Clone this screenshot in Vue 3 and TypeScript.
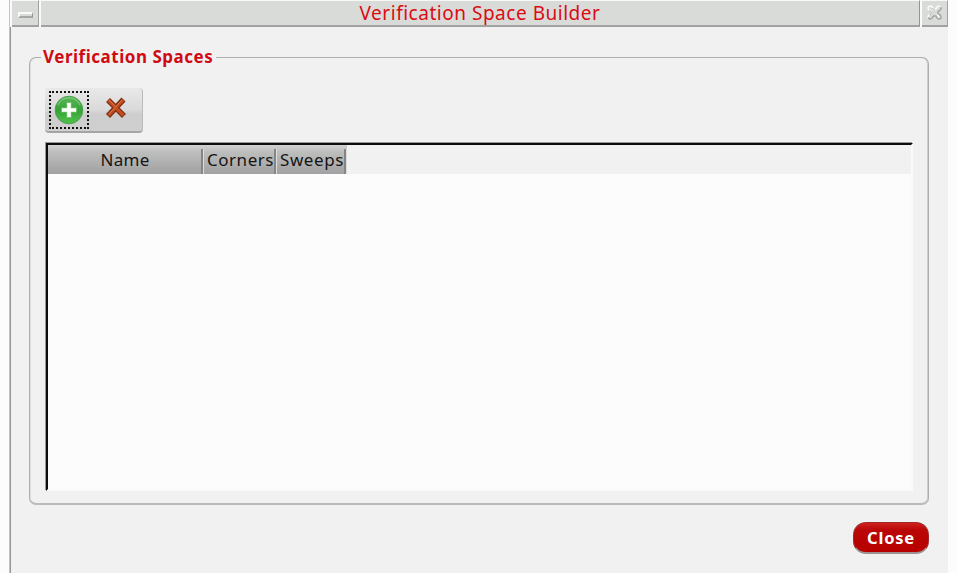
<script setup lang="ts">
interface Column {
  label: string
  key: string
}

const columns: Column[] = [
  { label: 'Name', key: 'name' },
  { label: 'Corners', key: 'corners' },
  { label: 'Sweeps', key: 'sweeps' },
]
</script>

<template>
  <div class="window">
    <header class="titlebar">
      <button class="sys menu" aria-label="Window menu"><span class="dash"></span></button>
      <h1 class="title"><span>Verification Space Builder</span></h1>
      <button class="sys shut" aria-label="Close window">
        <svg width="18" height="18" viewBox="0 0 18 18" fill="none" stroke-linecap="round" stroke-linejoin="round">
          <path d="M2 3.500Q4 1 6.500 3L7.500 5.500H9.500L11 3Q13.500 1 15 3.500M2 3.500Q2 6 5 7.500V9.500Q2 11 2 14" stroke="#fafafa" stroke-width="1.500" />
          <path d="M15 3.500Q15.500 6 12 7.500V9.500Q15.500 11 15 14Q13.500 16 11 14L10 12H7.500L6 14Q4 16 2.500 14" stroke="#a4a6a4" stroke-width="1.500" />
          <path d="M3.500 7L5.500 8.500L4 11M7 4.500L8.500 6" stroke="#a4a6a4" stroke-width="1" />
          <path d="M11.500 11L13 13" stroke="#fafafa" stroke-width="1.300" />
        </svg>
      </button>
    </header>
    <main class="body">
      <fieldset class="group">
        <legend>Verification Spaces</legend>
        <div class="toolbar">
          <button class="tool focused" aria-label="Add">
            <svg width="30" height="30" viewBox="0 0 30 30">
              <defs>
                <linearGradient id="green" x1="0" y1="0" x2="0" y2="1">
                  <stop offset="0" stop-color="#5cb95c" />
                  <stop offset="0.5" stop-color="#35a236" />
                  <stop offset="1" stop-color="#4fc34b" />
                </linearGradient>
              </defs>
              <circle cx="15" cy="15" r="13.800" fill="url(#green)" stroke="#4a9e4d" stroke-width="1" />
              <path d="M4 10A12 12 0 0 1 26 10" fill="none" stroke="#8fd08d" stroke-width="0.900" />
              <path d="M15 7V23M7 15H23" stroke="#72c46d" stroke-width="5.200" />
              <path d="M15 8V22M8 15H22" stroke="#fff" stroke-width="3.600" />
            </svg>
          </button>
          <button class="tool" aria-label="Delete">
            <svg width="22" height="22" viewBox="0 0 22 22" fill="none">
              <path d="M3 3L19 19M18.500 2.500L3 19" stroke="#7a3014" stroke-width="5.600" />
              <path d="M3.200 3.200L18.500 18.500M18.200 3L3.500 18.500" stroke="#c34b20" stroke-width="3.200" />
              <path d="M4 3L10 9M17 3L4 17" stroke="#e47c4c" stroke-width="0.900" />
            </svg>
          </button>
        </div>
        <div class="table">
          <div class="head">
            <div v-for="c in columns" :key="c.key" class="cell" :class="c.key"><span>{{ c.label }}</span></div>
          </div>
          <div class="rows"></div>
        </div>
      </fieldset>
      <footer class="actions">
        <button class="close">Close</button>
      </footer>
    </main>
  </div>
</template>

<style>
body {
  background: #fcfcfc;
  overflow: hidden;
}
</style>

<style scoped>
* {
  box-sizing: border-box;
}
button {
  margin: 0;
  padding: 0;
  font: inherit;
}
.window {
  width: 939px;
  height: 573px;
  margin-left: 9px;
  display: flex;
  flex-direction: column;
  background: #f2f1f2;
  border-left: 1px solid #c4c4c4;
  box-shadow: inset 1px 0 #969696;
  font-family: "Noto Sans", "Open Sans", sans-serif;
  color: #151515;
}
.titlebar {
  display: flex;
  height: 27px;
  padding-left: 2px;
  background: #fafafa;
  flex: none;
}
.sys {
  display: flex;
  align-items: center;
  justify-content: center;
  width: 27px;
  height: 27px;
  border: solid #a0a2a0;
  border-width: 0 1px 2px 0;
  border-top: 1px solid #f8f8f8;
  background: #d9dbd9;
}
.shut {
  width: 26px;
}
.shut svg {
  flex: none;
}
.dash {
  width: 15px;
  height: 6px;
  margin: 4px 0 0;
  border: 2px solid #fafafa;
  border-right: 1px solid #939593;
  border-bottom: 2px solid #a5a7a5;
  background: #d9dbd9;
}
.title {
  flex: 1;
  margin: 0 2px;
  border-top: 1px solid #f8f8f8;
  border-right: 1px solid #939593;
  border-bottom: 2px solid #a0a2a0;
  background: #d9dbd9;
  color: #dc0b12;
  font-size: 19px;
  font-weight: 400;
  line-height: 24px;
  letter-spacing: 0.52px;
  text-align: center;
  white-space: nowrap;
}
.body {
  flex: 1;
  padding: 18px 19px 0;
}
.group {
  height: 460px;
  min-width: 0;
  margin: 0;
  padding: 18px 15px 0;
  border: 1px solid #adafad;
  border-bottom-width: 2px;
  border-bottom-color: #b9bbb9;
  border-radius: 7px;
  box-shadow: inset 1px 0 #dedede, inset -1px 0 #cccecc;
}
legend {
  height: 25px;
  margin-left: -4px;
  padding: 0 3px 0 2px;
  color: #cf0b12;
  font-size: 17px;
  font-weight: 700;
  line-height: 24px;
  letter-spacing: 0.52px;
  white-space: nowrap;
}
.toolbar {
  display: flex;
  align-items: center;
  width: 98px;
  height: 45px;
  padding: 0 4px;
  border-radius: 4px;
  background: linear-gradient(#e9e9e9, #dadada 50%, #cecece 60%, #cfcfcf);
  border-bottom: 2px solid #a5a5a5;
  border-right: 1px solid #bbb;
}
.tool {
  display: flex;
  align-items: center;
  justify-content: center;
  width: 40px;
  height: 38px;
  border: 0;
  background: none;
}
.tool + .tool {
  width: 53px;
  padding-bottom: 4px;
  padding-left: 5px;
}
.tool svg {
  flex: none;
}
.focused {
  flex: none;
  border: 2px dotted #111;
}
.table {
  display: flex;
  flex-direction: column;
  width: 868px;
  height: 348px;
  margin-top: 10px;
  border-top: 2px solid #0d0d0d;
  border-left: 2px solid #0d0d0d;
  border-right: 2px solid #fafafa;
  border-bottom: 2px solid #fafafa;
  box-shadow: -1px -1px #999;
  margin-left: 1px;
  width: 867px;
}
.head {
  display: flex;
  height: 29px;
  flex: none;
}
.cell {
  position: relative;
  display: flex;
  justify-content: center;
  height: 29px;
  background: linear-gradient(#d0d0d0, #bcbebc 25%, #a2a0a2);
  font-size: 17px;
  line-height: 29px;
  letter-spacing: 0.3px;
  white-space: nowrap;
}
.cell::after {
  content: "";
  position: absolute;
  top: 4px;
  right: 0;
  bottom: 0;
  width: 2px;
  background: #858585;
  border-right: 1px solid #ddd;
}
.name {
  width: 156px;
  padding-right: 2px;
}
.corners {
  width: 73px;
  letter-spacing: 0.55px;
}
.sweeps {
  width: 70px;
  letter-spacing: 0.6px;
}
.rows {
  flex: 1;
  background: #fcfcfc;
}
.actions {
  display: flex;
  justify-content: flex-end;
  padding-top: 17px;
}
.close {
  width: 76px;
  height: 32px;
  border: 1px solid #a02a2a;
  border-bottom: 2px solid #9c9292;
  border-radius: 13px;
  background: linear-gradient(#cf2020, #b90606 25%, #b80000);
  color: #fff;
  font-size: 16.5px;
  font-weight: 700;
  letter-spacing: 0.8px;
}
</style>
